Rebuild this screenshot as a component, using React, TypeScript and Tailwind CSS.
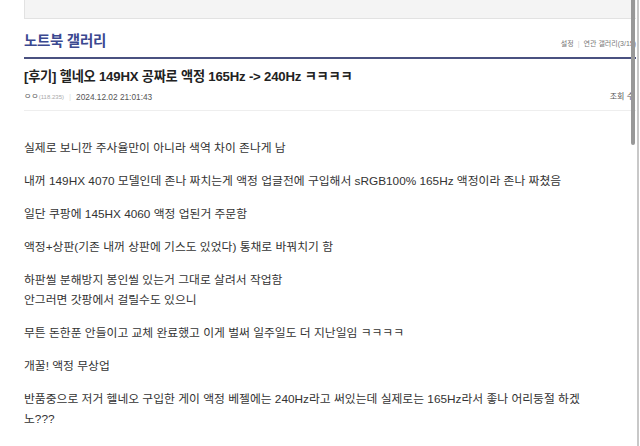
const paragraphs: string[][] = [
  ["실제로 보니깐 주사율만이 아니라 색역 차이 존나게 남"],
  ["내꺼 149HX 4070 모델인데 존나 짜치는게 액정 업글전에 구입해서 sRGB100% 165Hz 액정이라 존나 짜쳤음"],
  ["일단 쿠팡에 145HX 4060 액정 업된거 주문함"],
  ["액정+상판(기존 내꺼 상판에 기스도 있었다) 통채로 바꿔치기 함"],
  ["하판씰 분해방지 봉인씰 있는거 그대로 살려서 작업함", "안그러면 갓팡에서 걸릴수도 있으니"],
  ["무튼 돈한푼 안들이고 교체 완료했고 이게 벌써 일주일도 더 지난일임 ㅋㅋㅋㅋ"],
  ["개꿀! 액정 무상업"],
  ["반품중으로 저거 헬네오 구입한 게이 액정 베젤에는 240Hz라고 써있는데 실제로는 165Hz라서 좋나 어리둥절 하겠", "노???"],
];

export default function App() {
  return (
    <div className="relative h-[446px] w-[640px] overflow-hidden bg-white font-['Liberation_Sans','Noto_Sans_CJK_KR',sans-serif] text-[#333]">
      <div className="pl-6 pr-1">
        {/* top banner box */}
        <div className="h-[19px] border-b border-l border-[#e2e2e2] bg-[#f4f4f4]" />

        {/* gallery header */}
        <div className="flex h-[40px] items-start justify-between border-b-2 border-[#4a5180] pt-[13px]">
          <h2 className="text-[14.5px] font-bold leading-[18px] tracking-[-0.3px] text-[#3b4890]">노트북 갤러리</h2>
          <div className="mt-[7px] flex items-center gap-[4px] whitespace-nowrap text-[7px] leading-[10px] text-[#777]">
            <span>설정</span>
            <span className="text-[#d0d0d0]">|</span>
            <span>연관 갤러리(3/15)</span>
          </div>
        </div>

        {/* post title */}
        <div className="pt-[9px]">
          <h1 className="whitespace-nowrap text-[13.2px] font-bold leading-[18px] tracking-[-0.2px] text-[#222]">
            [후기] 헬네오 149HX 공짜로 액정 165Hz -&gt; 240Hz ㅋㅋㅋㅋ
          </h1>
          <div className="mt-[5px] flex items-center justify-between leading-[12px]">
            <div className="flex items-center whitespace-nowrap">
              <span className="text-[8px] text-[#555]">ㅇㅇ</span>
              <span className="text-[6px] text-[#aaa]">(118.235)</span>
              <span className="mx-[5px] text-[8px] text-[#ddd]">|</span>
              <span className="text-[8.3px] text-[#555]">2024.12.02 21:01:43</span>
            </div>
            <span className="whitespace-nowrap pr-[2px] text-[8px] text-[#555]">조회 수</span>
          </div>
          <div className="mt-[7px] border-b border-[#eeeeee]" />
        </div>

        {/* body */}
        <div className="space-y-[13px] pt-[27px] text-[11.8px] leading-[20px] text-[#333]">
          {paragraphs.map((lines, i) => (
            <p key={i} className="whitespace-nowrap">
              {lines.map((line, j) => (
                <span key={j} className="block">
                  {line}
                </span>
              ))}
            </p>
          ))}
        </div>
      </div>

      {/* scrollbar */}
      <div className="absolute right-[1px] top-0 h-full w-[2px] bg-[#c8c8c8]" />
      <div className="absolute right-[5px] top-0 h-[145px] w-[4px] rounded-b-full bg-[#989898]" />
    </div>
  );
}
